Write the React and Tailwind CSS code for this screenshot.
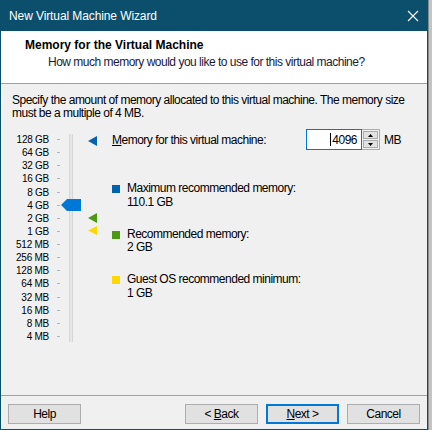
import React from "react";

const font = { fontFamily: '"Liberation Sans", Arial, sans-serif' };

function Legend({ color, label, value }) {
  return (
    <div className="flex items-start">
      <div className={`w-[8px] h-[8px] mt-[3px] ${color}`} />
      <div className="ml-[7px] leading-[13.5px] text-[12px] text-black">
        <div>{label}</div>
        <div>{value}</div>
      </div>
    </div>
  );
}

function Btn({ children, primary }) {
  return (
    <div
      className={`w-[73px] h-[20px] flex items-center justify-center text-[12px] text-black bg-[#e1e1e1] whitespace-pre ${
        primary ? "border-2 border-[#0078d7]" : "border border-[#adadad]"
      }`}
    >
      {children}
    </div>
  );
}

export default function App() {
  const labels = [
    "128 GB", "64 GB", "32 GB", "16 GB", "8 GB", "4 GB", "2 GB", "1 GB",
    "512 MB", "256 MB", "128 MB", "64 MB", "32 MB", "16 MB", "8 MB", "4 MB",
  ];
  return (
    <div className="w-[432px] h-[430px] flex bg-[#f0f0f0] tracking-[-0.5px]" style={font}>
      <div className="w-[428px] h-[430px] flex flex-col border-l border-r border-b border-[#0b4f6c] bg-[#f0f0f0]">
        {/* Title bar */}
        <div className="h-[31px] bg-[#0b4f6c] flex items-center justify-between shrink-0">
          <span className="ml-[8px] text-white text-[12px] tracking-[-0.1px]">New Virtual Machine Wizard</span>
          <svg width="12" height="12" viewBox="0 0 12 12" className="mr-[8px]">
            <path d="M1 1 L11 11 M11 1 L1 11" stroke="white" strokeWidth="1.1" />
          </svg>
        </div>
        {/* Header */}
        <div className="h-[53px] bg-white border-b border-[#a0a0a0] shrink-0 pt-[7px]">
          <div className="ml-[24px] text-[12px] font-bold leading-[14px] text-black tracking-normal">
            Memory for the Virtual Machine
          </div>
          <div className="ml-[47px] mt-[3px] text-[12px] leading-[14px] text-[#1a1a3a]">
            How much memory would you like to use for this virtual machine?
          </div>
        </div>
        {/* Body */}
        <div className="flex-1 flex flex-col">
          <div className="pl-[11px] pt-[10px] text-[12px] leading-[13px] text-black">
            <div className="whitespace-nowrap">Specify the amount of memory allocated to this virtual machine. The memory size</div>
            <div>must be a multiple of 4 MB.</div>
          </div>
          <div className="flex mt-[13px]">
            {/* Slider */}
            <div className="relative w-[110px] h-[212px] shrink-0">
              <div className="flex">
                <div className="w-[48px] flex flex-col items-end">
                  {labels.map((l) => (
                    <div key={l} className="h-[13.13px] leading-[13px] text-[10px] tracking-[-0.25px] text-black whitespace-nowrap">
                      {l}
                    </div>
                  ))}
                </div>
                <div className="ml-[8px] w-[3px] flex flex-col">
                  {labels.map((l) => (
                    <div key={l} className="h-[13.13px] flex items-center">
                      <div className="w-[3px] h-[1px] bg-[#b4b4b4]" />
                    </div>
                  ))}
                </div>
                <div className="ml-[9px] mt-[1px] w-[4px] h-[208px] bg-[#e7e7e7] border-x border-[#d6d6d6]" />
              </div>
              {/* thumb */}
              <svg className="absolute left-[60px] top-[66px]" width="20" height="12" viewBox="0 0 20 12">
                <path d="M0 6 L6 0 L20 0 L20 12 L6 12 Z" fill="#0078d7" />
              </svg>
              {/* pointers */}
              <svg className="absolute left-[87px] top-[3px]" width="9" height="10" viewBox="0 0 9 10">
                <path d="M0 5 L9 0 L9 10 Z" fill="#0063b1" />
              </svg>
              <svg className="absolute left-[87px] top-[80px]" width="9" height="10" viewBox="0 0 9 10">
                <path d="M0 5 L9 0 L9 10 Z" fill="#4b9a16" />
              </svg>
              <svg className="absolute left-[87px] top-[93px]" width="9" height="9" viewBox="0 0 9 9">
                <path d="M0 4.5 L9 0 L9 9 Z" fill="#ffd800" />
              </svg>
            </div>
            {/* Right */}
            <div className="flex flex-col ml-[1px]">
              <div className="flex items-center h-[21px] -mt-[4px]">
                <span className="text-[12px] text-black w-[194px]">
                  <span className="underline">M</span>emory for this virtual machine:
                </span>
                <div className="w-[56px] h-[21px] bg-white border border-[#0078d7] flex items-center justify-end pr-[4px] text-[12px] text-black relative">
                  <span className="w-[1px] h-[13px] bg-black mr-[1px]" />
                  4096
                </div>
                <div className="w-[18px] h-[21px] border border-[#adadad] border-l-0 bg-[#f0f0f0] flex flex-col p-[1px] gap-[1px]">
                  <div className="flex-1 bg-[#e1e1e1] border border-[#adadad] flex items-center justify-center">
                    <svg width="5" height="3" viewBox="0 0 5 3"><path d="M0 3 L2.5 0 L5 3 Z" fill="#000" /></svg>
                  </div>
                  <div className="flex-1 bg-[#e1e1e1] border border-[#adadad] flex items-center justify-center">
                    <svg width="5" height="3" viewBox="0 0 5 3"><path d="M0 0 L2.5 3 L5 0 Z" fill="#000" /></svg>
                  </div>
                </div>
                <span className="ml-[4px] text-[12px] text-black">MB</span>
              </div>
              <div className="mt-[32px] flex flex-col gap-[18.7px]">
                <Legend color="bg-[#0063b1]" label="Maximum recommended memory:" value="110.1 GB" />
                <Legend color="bg-[#4b9a16]" label="Recommended memory:" value="2 GB" />
                <Legend color="bg-[#ffd800]" label="Guest OS recommended minimum:" value="1 GB" />
              </div>
            </div>
          </div>
          <div className="flex-1" />
          <div className="border-t border-[#a0a0a0] h-[34px] flex items-start pt-[8px] px-[7px] shrink-0">
            <Btn>Help</Btn>
            <div className="flex-1" />
            <div className="flex gap-[8px]">
              <Btn>{"< "}<span className="underline">B</span>ack</Btn>
              <Btn primary><span className="underline">N</span>{"ext >"}</Btn>
              <Btn>Cancel</Btn>
            </div>
          </div>
        </div>
      </div>
      <div className="flex-1 bg-[#c4c4c4] border-l border-[#8a8a8a]" />
    </div>
  );
}
